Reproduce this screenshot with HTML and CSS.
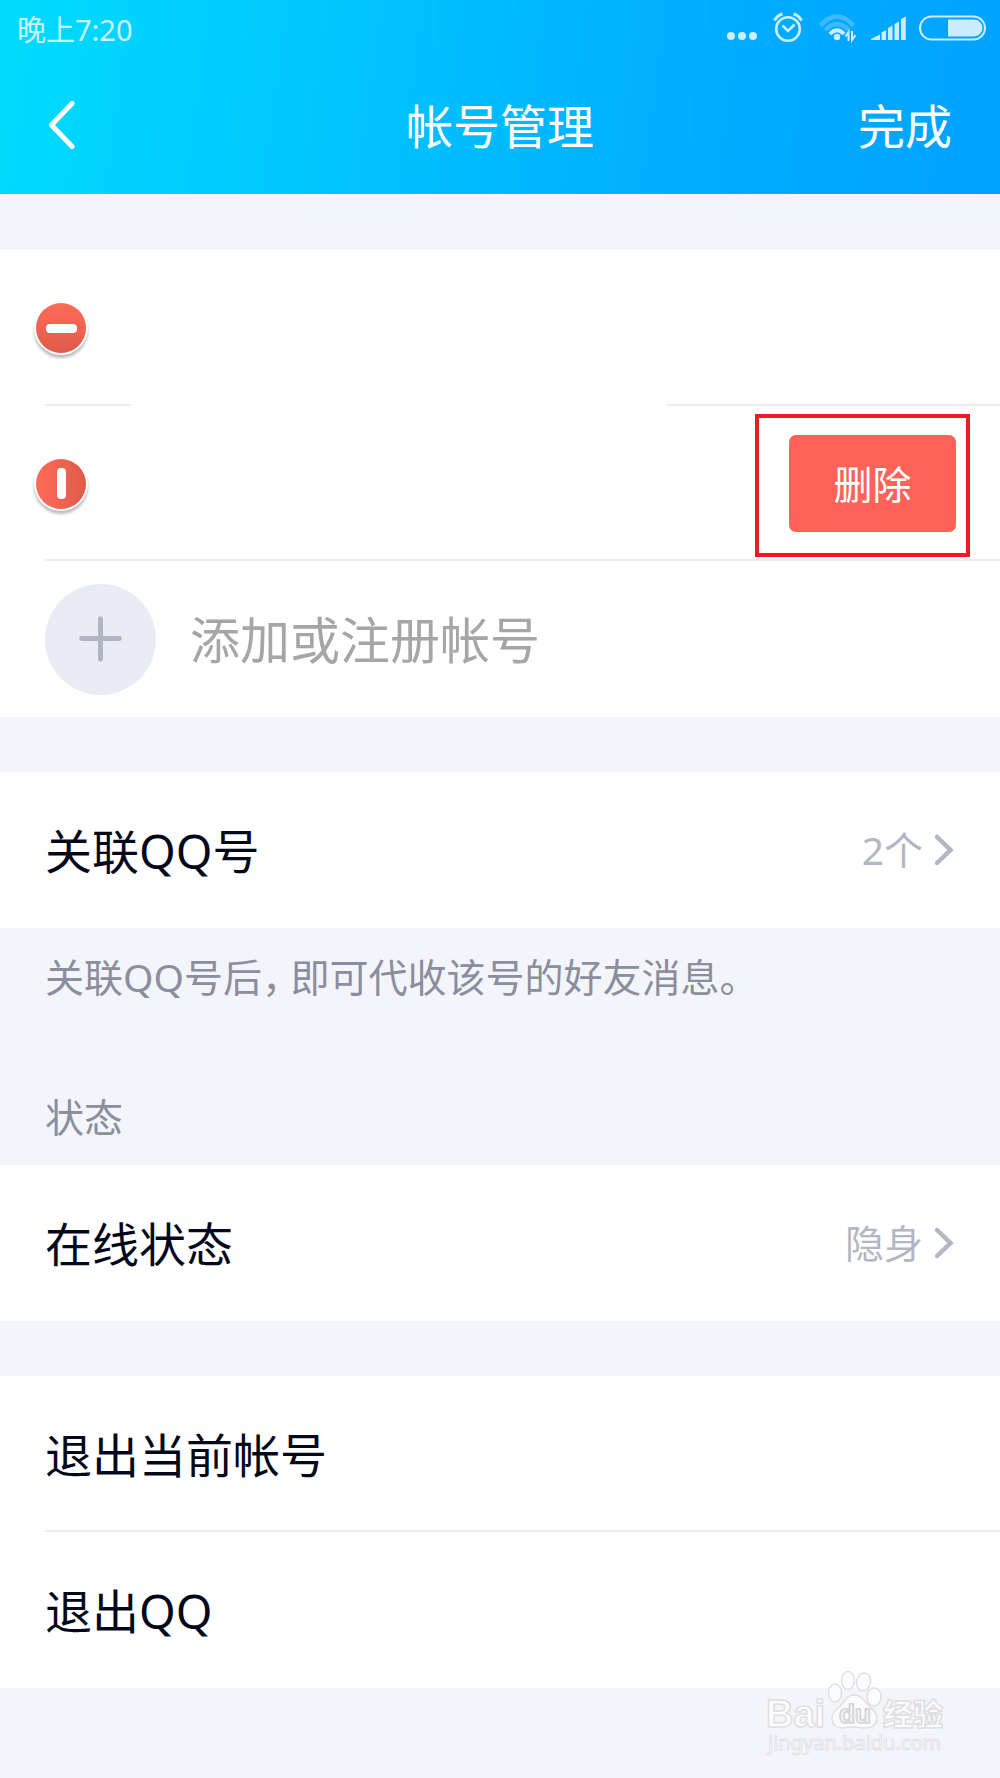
FILE: index.html
```html
<!DOCTYPE html>
<html lang="zh-CN">
<head>
<meta charset="utf-8">
<meta name="viewport" content="width=device-width, initial-scale=1">
<title>帐号管理</title>
<link rel="stylesheet" href="styles.css">
</head>
<body>
<header class="header">
  <div class="status-bar">
    <span class="status-time">晚上7:20</span>
    <svg class="status-icons" width="264" height="32" viewBox="0 0 264 32" fill="none" aria-hidden="true">
      <g fill="#ccecff">
        <circle cx="5" cy="24" r="4"/><circle cx="16" cy="24" r="4"/><circle cx="27" cy="24" r="4"/>
      </g>
      <g stroke="#ccecff" stroke-width="2.6">
        <circle cx="62" cy="17" r="11.8"/>
        <path d="M56.500 13.500l5.500 5.500 6.500-6.500"/>
        <path d="M48.500 8.500q2.500-5 8-6.500M75.500 8.500q-2.500-5-8-6.500" stroke-width="3"/>
      </g>
      <g stroke="#40baff" stroke-width="4.500">
        <path d="M94.500 13.500q16.500-18 33 0"/>
        <path d="M99.500 18q11.500-12 23 0"/>
      </g>
      <path d="M104 22q7-7.500 14 0" stroke="#ccecff" stroke-width="4"/>
      <circle cx="111" cy="25" r="3.200" fill="#ccecff"/>
      <path d="M122.500 29v-9l-3 4.500M126 19v9l3.500-5" stroke="#ccecff" stroke-width="2"/>
      <path fill="#ccecff" d="M145 27l9-4.500V28h-9zM155.500 20.500l4.500-2.500v10h-4.500zM162 16l4.500-2.500V28H162zM168.500 12l4.500-2.500V28h-4.500zM175 7l4.800-2.500V28H175z"/>
      <rect x="194" y="4.500" width="65" height="23" rx="11.500" stroke="#ccecff" stroke-width="2"/>
      <path fill="#ccecff" d="M222 7.500h26a8.500 8.500 0 0 1 0 17h-26z"/>
    </svg>
  </div>
  <nav class="nav-bar">
    <button class="nav-back" type="button" aria-label="返回">
      <svg width="28" height="50" viewBox="0 0 28 50" fill="none" aria-hidden="true"><path d="M24 3.500L3.500 25 24 46.500" stroke="#fff" stroke-width="5" stroke-linecap="round" stroke-linejoin="round"/></svg>
    </button>
    <h1 class="nav-title">帐号管理</h1>
    <button class="nav-done" type="button">完成</button>
  </nav>
</header>

<main class="content">
  <section class="group">
    <div class="row account-row">
      <button class="remove" type="button" aria-label="移除"><span class="remove-bar"></span></button>
      <span class="divider divider-start"></span>
      <span class="divider divider-end"></span>
    </div>
    <div class="row account-row account-row-open">
      <button class="remove remove-active" type="button" aria-label="取消移除"><span class="remove-bar"></span></button>
      <div class="highlight"><button class="delete" type="button">删除</button></div>
      <span class="divider"></span>
    </div>
    <button class="row add-row" type="button">
      <svg class="add-icon" width="111" height="111" viewBox="0 0 112 112" aria-hidden="true"><circle cx="56" cy="56" r="56" fill="#e9ecf4"/><path d="M37 55h38M56 35v41" stroke="#b1b4c3" stroke-width="5" stroke-linecap="round"/></svg>
      <span class="add-label">添加或注册帐号</span>
    </button>
  </section>

  <section class="group">
    <a class="row" href="#linked">
      <span class="label">关联QQ号</span>
      <span class="value">2个</span>
      <svg class="chevron" width="20" height="32" viewBox="0 0 20 32" fill="none" aria-hidden="true"><path d="M2 3l13.500 13L2 29" stroke="#b3b6c4" stroke-width="4.500" stroke-linecap="round"/></svg>
    </a>
  </section>
  <p class="note">关联QQ号后<span class="comma">，</span>即可代收该号的好友消息。</p>

  <h2 class="section-title">状态</h2>
  <section class="group">
    <a class="row" href="#status">
      <span class="label">在线状态</span>
      <span class="value">隐身</span>
      <svg class="chevron" width="20" height="32" viewBox="0 0 20 32" fill="none" aria-hidden="true"><path d="M2 3l13.500 13L2 29" stroke="#b3b6c4" stroke-width="4.500" stroke-linecap="round"/></svg>
    </a>
  </section>

  <section class="group">
    <button class="row" type="button"><span class="label">退出当前帐号</span><span class="divider"></span></button>
    <button class="row" type="button"><span class="label">退出QQ</span></button>
  </section>
</main>

<svg class="watermark" width="190" height="92" viewBox="0 0 190 92" role="img" aria-label="Baidu 经验 jingyan.baidu.com">
  <g fill="#fcfcfe" stroke="#dedfe3" stroke-width="1.500">
    <text class="mark-latin" x="3" y="57">Bai</text>
    <ellipse cx="72" cy="23" rx="6.500" ry="9"/>
    <ellipse cx="85" cy="10.500" rx="6.500" ry="9"/>
    <ellipse cx="100.500" cy="12" rx="7" ry="9" transform="rotate(12 100.500 12)"/>
    <ellipse cx="111" cy="27" rx="7" ry="9"/>
    <path d="M91 25c-7 0-9 6-14 11-6 5-9 9-8 14 1 6 6 8 11 8 5-1 7-1 11-1s7 1 12 1c5 0 10-3 11-8 1-6-3-9-8-14-5-5-8-11-15-11z"/>
    <text class="mark-cjk" x="120" y="55">经验</text>
  </g>
  <text class="mark-du" x="76" y="53">du</text>
  <text class="mark-url" x="5" y="80">jingyan.baidu.com</text>
</svg>
</body>
</html>
```
FILE: styles.css
```css
* { box-sizing: border-box; }

body {
  margin: 0;
  position: relative;
  min-height: 100vh;
  background: #f4f5fa;
  color: #03081a;
  font-family: "Noto Sans", "Noto Sans CJK SC", sans-serif;
  font-weight: 400;
}

button {
  margin: 0;
  padding: 0;
  border: 0;
  background: none;
  color: inherit;
  font: inherit;
  text-align: left;
}

svg { display: block; flex: none; }

.header {
  background: linear-gradient(98deg, #00dcff 0%, #00c6ff 32%, #00aeff 68%, #00a2ff 100%);
  color: #fff;
}

.status-bar {
  display: flex;
  align-items: center;
  justify-content: space-between;
  height: 56px;
  padding: 0 10px 0 17px;
}

.status-time {
  color: #ccf5ff;
  font-size: 29px;
}

.nav-bar {
  display: grid;
  grid-template-columns: 1fr auto 1fr;
  align-items: center;
  height: 138px;
  padding: 0 48px;
}

.nav-title {
  margin: 0;
  padding-bottom: 4px;
  font-size: 47px;
  font-weight: 400;
}

.nav-done {
  justify-self: end;
  padding-bottom: 4px;
  font-size: 47px;
}

.content {
  display: flex;
  flex-direction: column;
  padding-top: 56px;
}

.group {
  margin-bottom: 55px;
  background: #fff;
}

.row {
  position: relative;
  display: flex;
  align-items: center;
  width: 100%;
  height: 156px;
  padding: 0 45px;
  color: inherit;
  text-decoration: none;
}

.label {
  flex: 1;
  padding-bottom: 4px;
  font-size: 47px;
}

.value {
  margin-right: 12px;
  padding-bottom: 4px;
  color: #b3b6c4;
  font-size: 39px;
}

.divider {
  position: absolute;
  right: 0;
  bottom: 0;
  left: 45px;
  height: 2px;
  background: #e9ecf5;
}

.divider-start {
  right: auto;
  width: 86px;
}

.divider-end { left: 66.7%; }

.account-row { padding: 0 30px 0 36px; }

.account-row-open {
  justify-content: space-between;
  height: 155px;
}

.remove {
  display: flex;
  align-items: center;
  justify-content: center;
  width: 50px;
  height: 50px;
  border-radius: 50%;
  background: linear-gradient(#ff6b57, #e05a4a);
  box-shadow: 0 0 0 2px #fff, 0 3px 3px 2px #bbb;
}

.remove-active {
  transform: rotate(-90deg);
  box-shadow: 0 0 0 2px #fff, -3px 0 3px 2px #bbb;
}

.remove-bar {
  width: 31px;
  height: 9px;
  border-radius: 4px;
  background: #fff;
}

.highlight {
  align-self: flex-end;
  margin-bottom: 4px;
  padding: 17px 10px 21px 30px;
  border: 4px solid #ed1c24;
}

.delete {
  display: block;
  width: 167px;
  height: 97px;
  padding-bottom: 4px;
  border-radius: 7px;
  background: #ff6257;
  color: #fff;
  font-size: 39px;
  text-align: center;
}

.add-row {
  gap: 34px;
  color: #a6a6a6;
  font-size: 50px;
}

.add-label { padding-bottom: 4px; }

.note {
  margin: -34px 0 0;
  padding: 0 45px;
  color: #8a8e9e;
  font-size: 39px;
  line-height: 56px;
}

.comma {
  margin-right: 9px;
  font-feature-settings: "halt";
}

.section-title {
  margin: 84px 0 20px;
  padding: 0 45px;
  color: #8a8e9e;
  font-size: 39px;
  font-weight: 400;
  line-height: 56px;
}

.watermark {
  position: absolute;
  right: 47px;
  bottom: 16px;
}

.mark-latin, .mark-du {
  font-family: "Liberation Sans", sans-serif;
  font-size: 38px;
  font-weight: 700;
}

.mark-du {
  fill: #fcfcfe;
  stroke: #d6d7dc;
  stroke-width: 2px;
  font-size: 26px;
}

.mark-cjk {
  font-family: "Noto Sans CJK SC", sans-serif;
  font-size: 30px;
  font-weight: 900;
}

.mark-url {
  fill: #fcfcfe;
  stroke: #e2e3e7;
  stroke-width: 1px;
  font-size: 20px;
}
```
